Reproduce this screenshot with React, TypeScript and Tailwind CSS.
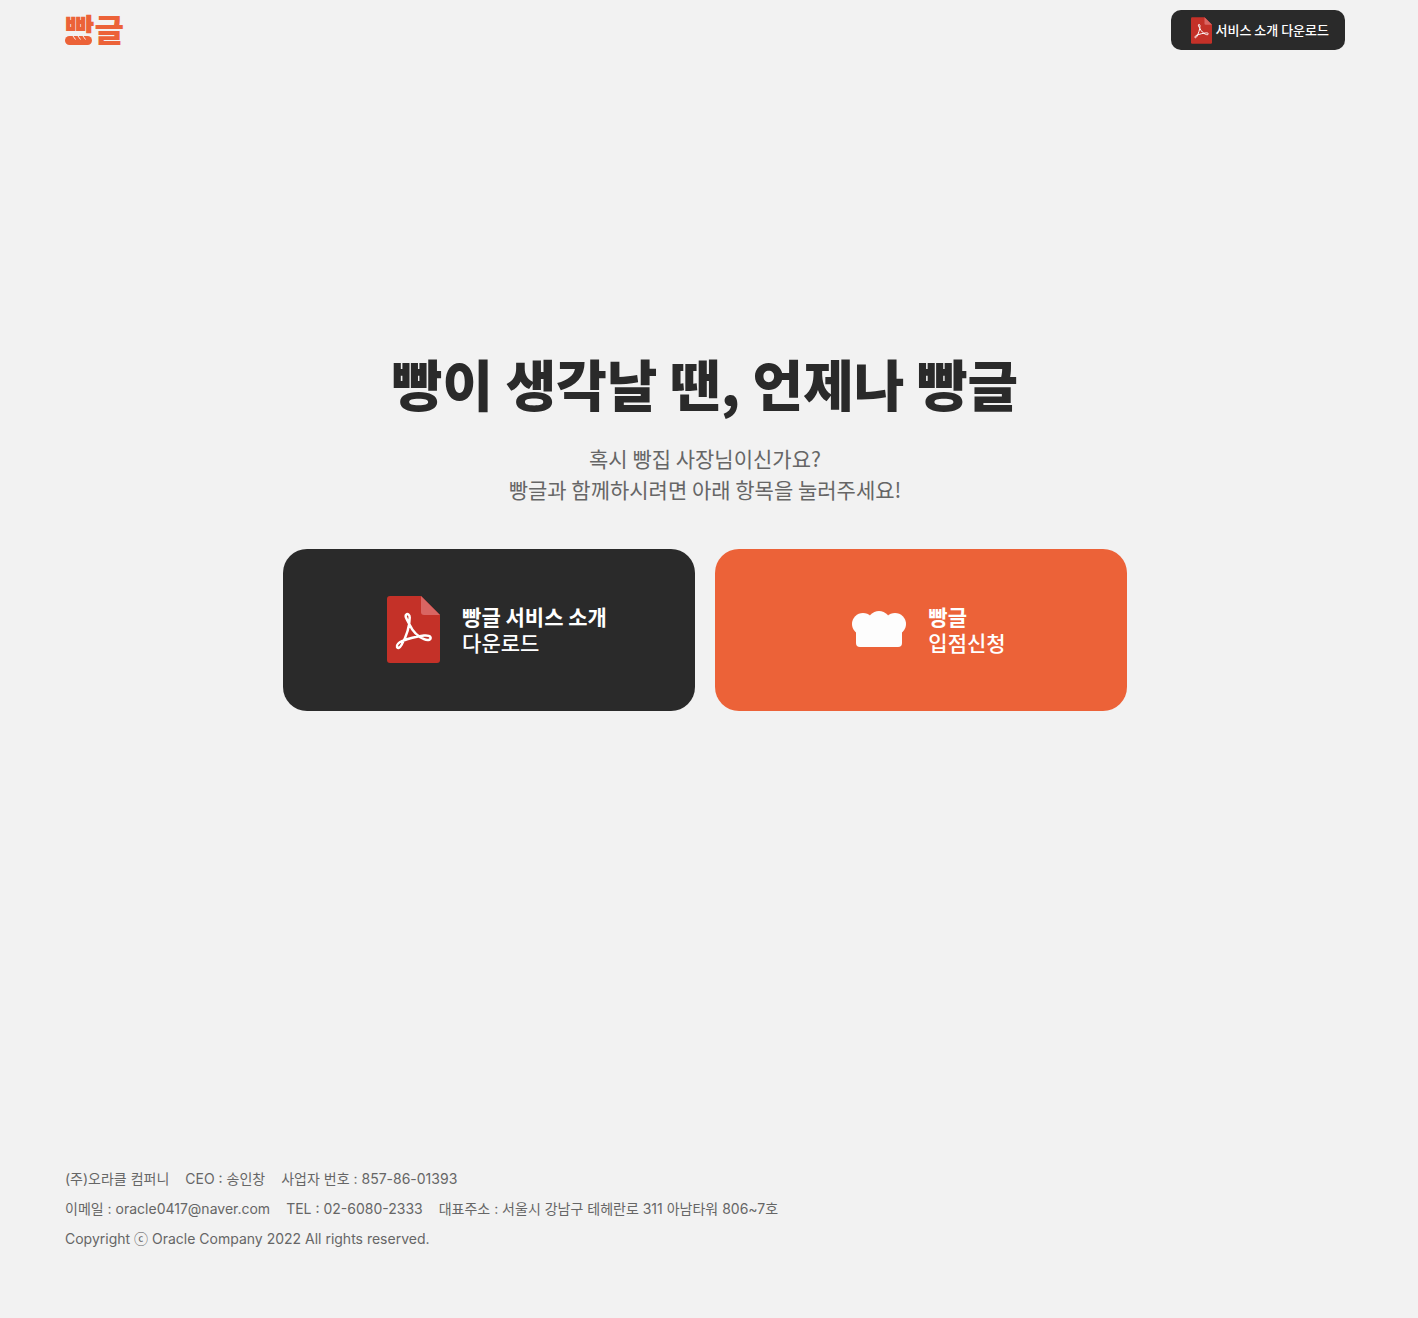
function PdfIcon({ className }: { className: string }) {
  return (
    <svg viewBox="0 0 53 67" className={className} aria-hidden="true">
      <path d="M3 0H34L53 19V64a3 3 0 0 1-3 3H3a3 3 0 0 1-3-3V3a3 3 0 0 1 3-3Z" fill="#c43128" />
      <path d="M34 0 53 19H37a3 3 0 0 1-3-3Z" fill="#d96562" />
      <path
        d="M22.500 28.500C20 24 17.500 20 19.200 18.600C20.500 17.500 22.800 18.600 22.700 21.500C22.600 31 18.500 42 14.500 49C12.800 52 10.700 52.600 10 51C9.200 49 12 46.500 15 45.200C22 42.300 30 40.500 37 39.600C40.500 39.200 43.900 40 43.600 42.200C43.300 44.500 40 44.600 37 43.200C31 40.600 25.500 35 22.500 28.500Z"
        fill="none"
        stroke="#fff"
        strokeWidth="2.500"
        strokeLinejoin="round"
      />
    </svg>
  );
}

function BreadIcon() {
  return (
    <svg viewBox="0 0 54 37" className="h-[37px] w-[54px] shrink-0" aria-hidden="true" fill="#fdfdfd">
      <circle cx="11" cy="13" r="11" />
      <circle cx="43" cy="13" r="11" />
      <ellipse cx="27" cy="13" rx="12" ry="13" />
      <path d="M4 15H50V32a4 4 0 0 1-4 4H8a4 4 0 0 1-4-4Z" />
    </svg>
  );
}

function Logo() {
  return (
    <a href="#" className="relative block pb-1 text-[32px] leading-10 font-black text-[#ec6238]">
      빵글
      <svg viewBox="0 0 29 18" className="absolute bottom-0 left-0 h-[18px] w-[29px]" aria-hidden="true">
        <rect width="29" height="18" fill="#f2f2f2" />
        <rect y="2" width="27" height="9" rx="4.500" fill="#ec6238" />
        <path d="M8 2 10.500 5.500M13 2 15.500 5.500M18 2 20.500 5.500" stroke="#f2f2f2" strokeWidth="1" />
      </svg>
    </a>
  );
}

const footerRows = [
  ["(주)오라클 컴퍼니", "CEO : 송인창", "사업자 번호 : 857-86-01393"],
  ["이메일 : oracle0417@naver.com", "TEL : 02-6080-2333", "대표주소 : 서울시 강남구 테헤란로 311 아남타워 806~7호"],
  ["Copyright ⓒ Oracle Company 2022 All rights reserved."],
];

export default function App() {
  return (
    <div className="flex min-h-screen flex-col bg-[#f2f2f2] pr-2 font-['Noto_Sans_CJK_KR',sans-serif]">
      <header className="mx-auto flex h-[60px] w-full max-w-[1280px] items-center justify-between">
        <Logo />
        <button className="flex h-10 items-center gap-1 rounded-[10px] bg-[#2a2a2a] pr-4 pl-5 text-[13px] font-medium text-white">
          <PdfIcon className="h-[27px] w-[21px]" />
          서비스 소개 다운로드
        </button>
      </header>

      <main className="flex flex-1 flex-col items-center justify-center pb-[166px]">
        <h1 className="text-[55px] leading-[70px] font-black text-[#2a2a2a]">빵이 생각날 땐, 언제나 빵글</h1>
        <p className="mt-[26px] text-center text-[21px] leading-[31px] text-[#666666]">
          혹시 빵집 사장님이신가요?
          <br />
          빵글과 함께하시려면 아래 항목을 눌러주세요!
        </p>
        <div className="mt-11 grid w-full max-w-[844px] grid-cols-2 gap-5">
          <button className="flex h-[162px] items-center justify-center gap-[22px] rounded-3xl bg-[#2a2a2a] pb-0.5 pl-4 text-left text-[21px] leading-[26px] font-medium text-white">
            <PdfIcon className="h-[67px] w-[53px] shrink-0" />
            <span className="flex flex-col">
              <strong className="font-bold">빵글 서비스 소개</strong>
              <span>다운로드</span>
            </span>
          </button>
          <button className="flex h-[162px] items-center justify-center gap-[22px] rounded-3xl bg-[#ec6238] pb-0.5 pl-4 text-left text-[21px] leading-[26px] font-medium text-white">
            <BreadIcon />
            <span className="flex flex-col">
              <strong className="font-bold">빵글</strong>
              <span>입점신청</span>
            </span>
          </button>
        </div>
      </main>

      <footer className="mx-auto w-full max-w-[1280px] pb-16 font-['Inter','Noto_Sans_CJK_KR',sans-serif] text-sm leading-[30px] text-[#666666]">
        {footerRows.map((row) => (
          <p key={row[0]} className="flex flex-wrap gap-x-4">
            {row.map((item) => (
              <span key={item}>{item}</span>
            ))}
          </p>
        ))}
      </footer>
    </div>
  );
}
